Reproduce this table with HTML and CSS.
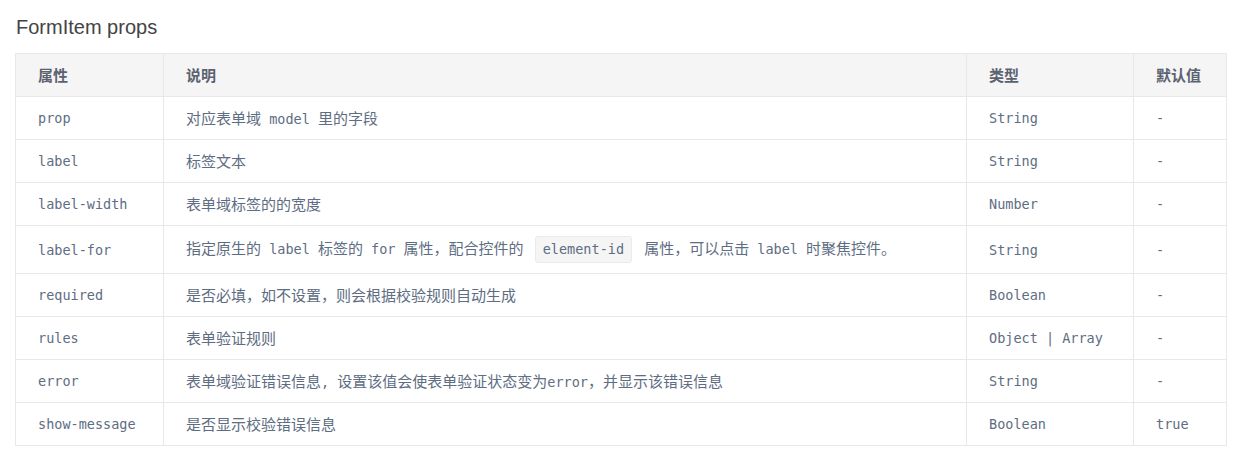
FILE: index.html
```html
<!DOCTYPE html>
<html lang="zh">
<head>
<meta charset="utf-8">
<title>FormItem props</title>
<link rel="stylesheet" href="styles.css">
</head>
<body>
<div class="page">
  <h3 class="title">FormItem props</h3>
  <table class="props">
    <colgroup>
      <col class="c-name">
      <col class="c-desc">
      <col class="c-type">
      <col class="c-def">
    </colgroup>
    <thead>
      <tr><th>属性</th><th>说明</th><th>类型</th><th>默认值</th></tr>
    </thead>
    <tbody>
      <tr><td class="m">prop</td><td>对应表单域<span class="m"> model </span>里的字段</td><td class="m">String</td><td class="m">-</td></tr>
      <tr><td class="m">label</td><td>标签文本</td><td class="m">String</td><td class="m">-</td></tr>
      <tr><td class="m">label-width</td><td>表单域标签的的宽度</td><td class="m">Number</td><td class="m">-</td></tr>
      <tr><td class="m">label-for</td><td>指定原生的<span class="m"> label </span>标签的<span class="m"> for </span>属性，配合控件的<span class="m"> </span><code class="code">element-id</code><span class="m"> </span>属性，可以点击<span class="m"> label </span>时聚焦控件。</td><td class="m">String</td><td class="m">-</td></tr>
      <tr><td class="m">required</td><td>是否必填，如不设置，则会根据校验规则自动生成</td><td class="m">Boolean</td><td class="m">-</td></tr>
      <tr><td class="m">rules</td><td>表单验证规则</td><td class="m">Object | Array</td><td class="m">-</td></tr>
      <tr><td class="m">error</td><td>表单域验证错误信息<span class="m">, </span>设置该值会使表单验证状态变为<span class="m">error</span>，并显示该错误信息</td><td class="m">String</td><td class="m">-</td></tr>
      <tr><td class="m">show-message</td><td>是否显示校验错误信息</td><td class="m">Boolean</td><td class="m">true</td></tr>
    </tbody>
  </table>
</div>
</body>
</html>
```

FILE: styles.css
```css
html, body {
  margin: 0;
  padding: 0;
  background: #ffffff;
}

.page {
  padding: 0 16px 0 15px;
  font-family: "Noto Sans CJK SC", sans-serif;
}

.title {
  margin: 16px 0 14px 1px;
  font-family: "Liberation Sans", Arial, "Noto Sans CJK SC", sans-serif;
  font-size: 20px;
  font-weight: 400;
  line-height: 23px;
  color: #444444;
}

.props {
  width: 100%;
  table-layout: fixed;
  border-collapse: collapse;
  font-size: 15px;
  color: #5e6d82;
}

.c-name { width: 148px; }
.c-desc { width: 803px; }
.c-type { width: 167px; }
.c-def { width: 93px; }

.props th,
.props td {
  border: 1px solid #e8e8e8;
  padding: 10px 22px;
  height: 22px;
  line-height: 22px;
  text-align: left;
  vertical-align: middle;
  white-space: nowrap;
}

.props th {
  background: #f5f5f5;
  font-weight: 700;
  color: #5b6270;
}

.m {
  font-family: "DejaVu Sans Mono", "Liberation Mono", "Noto Sans CJK SC", monospace;
  font-size: 13.5px;
  white-space: pre;
}

.props td span.m {
  line-height: 1;
}

.code {
  display: inline-block;
  font-family: "DejaVu Sans Mono", "Liberation Mono", monospace;
  font-size: 13.5px;
  line-height: 25px;
  padding: 0 7px;
  margin: 0 4px 0 3px;
  background: #f5f5f5;
  border: 1px solid #ebebeb;
  border-radius: 3px;
  vertical-align: middle;
}
```
